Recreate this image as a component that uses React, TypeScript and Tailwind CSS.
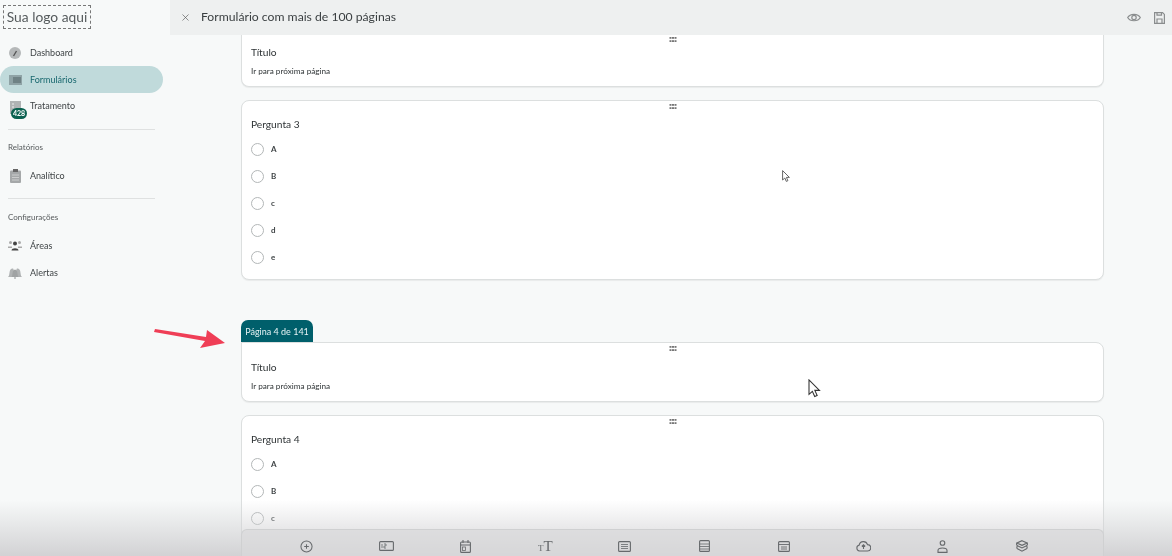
import React from "react";
import { X } from "lucide-react";

function Grip() {
  return (
    <svg width="8" height="6" viewBox="0 0 8 6" className="block" fill="#777">
      {[0.5, 3, 5.5].map((x) =>
        [1, 4.2].map((y) => <rect key={`${x}-${y}`} x={x} y={y} width="2" height="1.8" />)
      )}
    </svg>
  );
}

function Radio({ label }: { label: string }) {
  return (
    <div className="flex h-[27px] items-center gap-[7px]">
      <span className="mt-[2px] h-[13px] w-[13px] rounded-full border border-[#b3b7b8] bg-white" />
      <span className="text-[8px] font-bold text-[#3e4345]">{label}</span>
    </div>
  );
}

function Card({ title, children, className, titleGap = "mt-[6px]" }: { title: string; children?: React.ReactNode; className: string; titleGap?: string }) {
  return (
    <div className={`border border-[#dcdfdf] bg-white pl-[9px] shadow-[0_1px_1px_rgba(0,0,0,0.06)] ${className}`}>
      <div className="flex h-[10px] items-center justify-center pr-[9px]">
        <Grip />
      </div>
      <div className={`${titleGap} text-[10.2px] leading-[14px] text-[#2f3436]`}>{title}</div>
      {children}
    </div>
  );
}

function TitleBody() {
  return <div className="mt-[6px] text-[8.2px] leading-[12px] text-[#2f3436]">Ir para próxima página</div>;
}

function NavItem({ icon, label, active }: { icon: React.ReactNode; label: string; active?: boolean }) {
  return (
    <div
      className={`flex h-[27px] items-center gap-[8px] pl-[8px] text-[9px] ${
        active ? "mr-[7px] rounded-r-full rounded-l-full bg-[#c0dadb] text-[#19686f]" : "text-[#3f4446]"
      }`}
    >
      <span className="flex w-[14px] justify-center">{icon}</span>
      <span>{label}</span>
    </div>
  );
}

const Tool = ({ children }: { children: React.ReactNode }) => (
  <span className="flex w-[79.5px] shrink-0 justify-center">{children}</span>
);

const S = ({ children, w = 14, h = 14, vb = "0 0 14 14" }: { children: React.ReactNode; w?: number; h?: number; vb?: string }) => (
  <svg width={w} height={h} viewBox={vb} fill="none" stroke="#66696c" strokeWidth="1.1">
    {children}
  </svg>
);

export default function App() {
  return (
    <div className="relative flex h-[556px] w-[1172px] overflow-hidden bg-[#f7f9f9] font-['Lato','Noto_Sans',sans-serif] blur-[0.35px]">
      {/* Sidebar */}
      <aside className="flex w-[170px] shrink-0 flex-col">
        <div className="ml-[3px] mt-[5px] flex h-[24px] w-[88px] items-center justify-center border border-dashed border-[#777] text-[13.8px] text-[#555a5c]">
          Sua logo aqui
        </div>
        <div className="mt-[10px] flex flex-col">
          <NavItem
            label="Dashboard"
            icon={
              <svg width="12" height="12" viewBox="0 0 12 12">
                <circle cx="6" cy="6" r="6" fill="#b5b8b9" />
                <path d="M4.500 9 L7.500 4" stroke="#555" strokeWidth="1.4" />
              </svg>
            }
          />
          <NavItem
            active
            label="Formulários"
            icon={
              <svg width="13" height="10" viewBox="0 0 13 10">
                <rect width="13" height="10" fill="#8fa3a6" />
                <rect x="4" y="2" width="8" height="6" fill="#6f8285" />
              </svg>
            }
          />
          <div className="relative flex h-[29px] items-start gap-[8px] pl-[8px] pt-[7px] text-[9px] text-[#3f4446]">
            <span className="flex w-[14px] justify-center pt-[1px]">
              <svg width="11" height="13" viewBox="0 0 11 13">
                <rect width="11" height="13" fill="#b0b3b4" />
                <path d="M2 3h2M2 6h2" stroke="#eee" />
              </svg>
            </span>
            <span className="leading-[12px]">Tratamento</span>
            <span className="absolute left-[11px] top-[15px] flex h-[11px] w-[16px] items-center justify-center rounded-full bg-[#0b6150] text-[7px] font-bold text-white">
              428
            </span>
          </div>
        </div>
        <div className="ml-[8px] mt-[7px] h-px w-[147px] bg-[#dfe1e1]" />
        <div className="ml-[8px] mt-[11px] text-[8px] leading-[12px] text-[#55595b]">Relatórios</div>
        <div className="mt-[9px]">
          <NavItem
            label="Analítico"
            icon={
              <svg width="11" height="14" viewBox="0 0 11 14">
                <rect y="1.500" width="11" height="12.500" rx="1" fill="#a5a8a9" />
                <rect x="3" y="0" width="5" height="3" fill="#666" />
                <path d="M2 6h7M2 8.500h7M2 11h7" stroke="#d5d7d7" strokeWidth="0.8" />
              </svg>
            }
          />
        </div>
        <div className="ml-[8px] mt-[9px] h-px w-[147px] bg-[#dfe1e1]" />
        <div className="ml-[8px] mt-[12px] text-[8px] leading-[12px] text-[#55595b]">Configurações</div>
        <div className="mt-[9px] flex flex-col">
          <NavItem
            label="Áreas"
            icon={
              <svg width="14" height="11" viewBox="0 0 14 11">
                <circle cx="2.500" cy="2.500" r="1.500" fill="#aaa" />
                <circle cx="11.500" cy="2.500" r="1.500" fill="#aaa" />
                <path d="M0 6.500h4v1.500H0zM10 6.500h4v1.500h-4z" fill="#aaa" />
                <circle cx="7" cy="3.500" r="2" fill="#444" />
                <path d="M3.500 10.500c0-3 7-3 7 0z" fill="#444" />
              </svg>
            }
          />
          <NavItem
            label="Alertas"
            icon={
              <svg width="14" height="12" viewBox="0 0 14 12" fill="#b0b3b4">
                <path d="M0 10c1.500-1 1.200-4 1.800-6C2.400 2 4 .8 5.500 2L6 10z" />
                <path d="M14 10c-1.500-1-1.200-4-1.800-6C11.600 2 10 .8 8.500 2L8 10z" />
                <path d="M3.500 10c1-1 .8-4 1.500-6 .5-1.600 3.500-1.600 4 0 .7 2 .5 5 1.500 6z" fill="#a0a3a4" />
                <circle cx="7" cy="11" r="1" />
              </svg>
            }
          />
        </div>
      </aside>

      {/* Main */}
      <div className="flex min-w-0 flex-1 flex-col">
        <header className="relative z-10 flex h-[35px] shrink-0 items-center bg-[#eef0f0] pl-[10px] pr-[7px]">
          <X size={11} strokeWidth={1.4} color="#555" />
          <span className="ml-[10px] text-[12.2px] text-[#3a3f41]">Formulário com mais de 100 páginas</span>
          <span className="ml-auto flex items-center gap-[13px]">
            <svg width="14" height="11" viewBox="0 0 14 11" fill="none" stroke="#8a8d8e" strokeWidth="1.2">
              <path d="M.7 5.500C3 1.200 11 1.200 13.300 5.500 11 9.800 3 9.800.7 5.500z" />
              <circle cx="7" cy="5.500" r="2.200" />
            </svg>
            <svg width="11" height="12" viewBox="0 0 11 12" fill="none" stroke="#8a8d8e" strokeWidth="1.2">
              <path d="M.6.6h8l1.800 1.800v9H.6z" />
              <path d="M3 .6v2.600h4.500V.6M3 11.400V7h5v4.400" />
            </svg>
          </span>
        </header>

        <main className="ml-[71px] -mt-[1px] flex w-[863px] flex-col">
          <Card title="Título" titleGap="mt-[1px]" className="h-[53px] rounded-b-[8px] border-t-0">
            <TitleBody />
          </Card>
          <Card title="Pergunta 3" className="mt-[13px] h-[180px] rounded-[8px]">
            <div className="mt-[4px]">
              {["A", "B", "c", "d", "e"].map((l) => (
                <Radio key={l} label={l} />
              ))}
            </div>
          </Card>
          <div className="mt-[40px] flex h-[22px] w-[72px] items-center justify-center rounded-t-[7px] bg-[#005f6b] pt-[1px] text-[9px] text-[#e6f3f4]">
            Página 4 de 141
          </div>
          <Card title="Título" titleGap="mt-[7px]" className="h-[60px] rounded-[8px] rounded-tl-none">
            <TitleBody />
          </Card>
          <Card title="Pergunta 4" className="mt-[13px] h-[180px] rounded-[8px]">
            <div className="mt-[4px]">
              {["A", "B", "c"].map((l) => (
                <Radio key={l} label={l} />
              ))}
            </div>
          </Card>
        </main>
      </div>

      {/* Bottom fade over the page */}
      <div className="pointer-events-none absolute inset-x-0 bottom-0 h-[56px] bg-gradient-to-b from-transparent to-[#d2d2d4]" />

      {/* Floating toolbar */}
      <div className="absolute bottom-0 left-[241px] flex h-[27px] w-[863px] items-center rounded-t-[6px] border border-b-0 border-[#cfd0d1] bg-[#d8d8da]/70 pl-[25px] pt-[6px]">
        <Tool>
          <S w={13} h={13}>
            <circle cx="7" cy="7" r="6" />
            <path d="M7 4.500v5M4.500 7h5" />
          </S>
        </Tool>
        <Tool>
          <S w={15} h={10} vb="0 0 15 10">
            <rect x=".6" y=".6" width="13.800" height="8.800" rx="1" />
            <path d="M3 3v4M5 3h2v2H5v2h2" strokeWidth=".8" />
          </S>
        </Tool>
        <Tool>
          <S w={11} h={13} vb="0 0 11 13">
            <rect x=".6" y="2" width="9.800" height="10.400" rx="1" />
            <path d="M.6 5h9.800M3 0v3M8 0v3" />
            <rect x="2.500" y="7" width="3" height="3.500" strokeWidth=".8" />
          </S>
        </Tool>
        <Tool>
          <span className="font-['Liberation_Serif',serif] leading-none text-[#66696c]">
            <span className="text-[9px]">T</span>
            <span className="text-[15px]">T</span>
          </span>
        </Tool>
        <Tool>
          <S w={13} h={11} vb="0 0 13 11">
            <rect x=".6" y=".6" width="11.800" height="9.800" rx="1" />
            <path d="M3 3.500h7M3 5.500h7M3 7.500h7" strokeWidth=".8" />
          </S>
        </Tool>
        <Tool>
          <S w={11} h={12} vb="0 0 11 12">
            <rect x=".6" y=".6" width="9.800" height="10.800" rx="1" />
            <path d="M.6 4h9.800M.6 6.500h9.800M.6 9h9.800" strokeWidth=".8" />
          </S>
        </Tool>
        <Tool>
          <S w={12} h={11} vb="0 0 12 11">
            <rect x=".6" y=".6" width="10.800" height="9.800" rx="1" />
            <path d="M.6 3.500h10.800M3 6h6M3 8h6" strokeWidth=".9" />
          </S>
        </Tool>
        <Tool>
          <S w={15} h={12} vb="0 0 15 12">
            <path d="M4 11H3.500a3 3 0 0 1-.3-5.900 4.300 4.300 0 0 1 8.300-.5 3.200 3.200 0 0 1 0 6.400z" />
            <path d="M7.500 9V5M5.800 6.500l1.700-1.700 1.700 1.700" />
          </S>
        </Tool>
        <Tool>
          <S w={11} h={13} vb="0 0 11 13">
            <circle cx="5.500" cy="3" r="2.300" />
            <path d="M1 12.400V10.500C1 8.500 3 8 5.500 8S10 8.500 10 10.500v1.900z" />
          </S>
        </Tool>
        <Tool>
          <S w={12} h={13} vb="0 0 12 13">
            <path d="M6 .7 11 3 6 5.300 1 3z" />
            <path d="M1 3c-1 1.500-.5 2 .5 2.800L6 8l4.500-2.200c1-.8 1.500-1.300.5-2.800" />
            <path d="M1.500 5.800c-1 1.500-1 2.200 0 3L6 11.200l4.500-2.400c1-.8 1-1.500 0-3" />
          </S>
        </Tool>
      </div>

      {/* Annotation arrow */}
      <svg className="absolute left-[153px] top-[328px]" width="72" height="24" viewBox="0 0 72 24">
        <path d="M1 4 L52 13 L47 20 L72 15 L54 2 L53 9 L2 1 Z" fill="#ef3e56" />
      </svg>

      {/* Cursors captured in the recording */}
      <svg className="absolute left-[782px] top-[170px]" width="9" height="13" viewBox="0 0 9 13" fill="#fff" stroke="#555" strokeWidth=".9">
        <path d="M.6.6v9.400l2.200-2 1.500 3.400 1.600-.7L4.400 7.400h3z" />
      </svg>
      <svg className="absolute left-[808px] top-[379px]" width="14" height="20" viewBox="0 0 9 13" fill="#fff" stroke="#333" strokeWidth=".7">
        <path d="M.6.6v9.400l2.200-2 1.500 3.400 1.600-.7L4.400 7.400h3z" />
      </svg>
    </div>
  );
}
